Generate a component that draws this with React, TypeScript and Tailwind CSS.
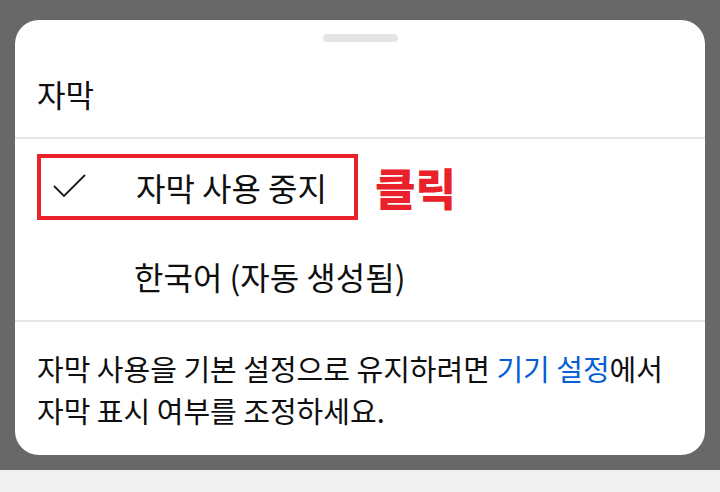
const font = { fontFamily: '"Noto Sans CJK KR", "Noto Sans", sans-serif' };

function Check() {
  return (
    <svg width="36" height="26" viewBox="0 0 36 26" fill="none">
      <path d="M2 13 L12 23 L33 2" stroke="#1a1a1a" strokeWidth="1.8" />
    </svg>
  );
}

export default function App() {
  return (
    <div className="w-[720px] h-[492px] bg-[#f0f0f0] flex flex-col" style={font}>
      <div className="h-[470px] bg-[#686868] pt-5 px-[15px]">
        <div className="bg-white rounded-[24px] h-[435px] flex flex-col">
          <div className="flex justify-center pt-[14px]">
            <div className="w-[75px] h-2 rounded-full bg-[#e5e5e5]" />
          </div>
          <div className="h-[95px] flex items-center pt-[10px] px-[22px] text-[31px] text-[#0f0f0f]">
            자막
          </div>
          <div className="h-[2px] bg-[#e6e6e6]" />
          <div className="flex items-center pt-[15px] pl-[22px]">
            <div className="w-[321px] h-[66px] border-4 border-[#e8212b] flex items-center">
              <div className="w-[95px] pl-[11px] flex items-center -mt-[2px]">
                <Check />
              </div>
              <span className="text-[32px] text-[#0f0f0f]">자막 사용 중지</span>
            </div>
            <span className="ml-[17px] text-[44px] font-black text-[#e8212b] leading-none">클릭</span>
          </div>
          <div className="h-[100px] flex items-center pt-[12px] pl-[119px] text-[32px] text-[#0f0f0f]">
            한국어 (자동 생성됨)
          </div>
          <div className="h-[2px] bg-[#e6e6e6]" />
          <p className="px-[22px] pt-[25px] text-[29px] leading-[42px] text-[#0f0f0f]">
            자막 사용을 기본 설정으로 유지하려면 <span className="text-[#065fd4]">기기 설정</span>에서
            <br />
            자막 표시 여부를 조정하세요.
          </p>
        </div>
      </div>
    </div>
  );
}
